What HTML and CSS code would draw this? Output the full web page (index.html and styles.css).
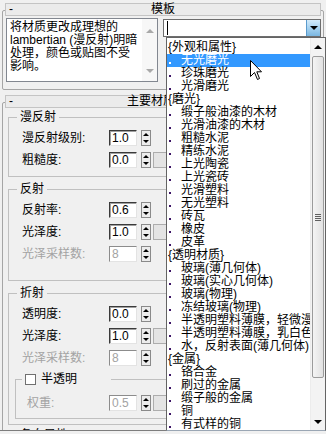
FILE: index.html
```html
<!DOCTYPE html>
<html lang="zh-CN">
<head>
    <meta charset="UTF-8">
    <title>材质模板</title>
    <link rel="stylesheet" href="styles.css">
</head>
<body>

    <div class="panel">
        <!-- Rollout: template -->
        <section class="rollout">
            <div class="rollout-head"><span class="toggle">-</span><span class="rollout-title">模板</span></div>
            <div class="template-body">
                <div class="desc">
                    <p class="desc-text">将材质更改成理想的<br>lambertian (漫反射)明暗<br>处理，颜色或贴图不受<br>影响。</p>
                    <div class="vscroll">
                        <span class="arrow up off"></span>
                        <span class="arrow down off"></span>
                    </div>
                </div>
                <div class="combo">
                    <span class="caret"></span>
                    <span class="combo-btn"><span class="arrow down"></span></span>
                </div>
            </div>
        </section>

        <!-- Rollout: main material parameters -->
        <section class="rollout">
            <div class="rollout-head"><span class="toggle">-</span><span class="rollout-title">主要材质参数</span></div>

            <div class="group group-diffuse">
                <div class="group-title">漫反射</div>
                <div class="row">
                    <span class="label">漫反射级别:</span>
                    <span class="field">1.0</span><span class="spin"></span>
                </div>
                <div class="row">
                    <span class="label">粗糙度:</span>
                    <span class="field">0.0</span><span class="spin"></span><span class="map"></span>
                </div>
            </div>

            <div class="group group-reflect">
                <div class="group-title">反射</div>
                <div class="row">
                    <span class="label">反射率:</span>
                    <span class="field">0.6</span><span class="spin"></span>
                </div>
                <div class="row">
                    <span class="label">光泽度:</span>
                    <span class="field">1.0</span><span class="spin"></span><span class="map"></span>
                </div>
                <div class="row off">
                    <span class="label">光泽采样数:</span>
                    <span class="field">8</span><span class="spin"></span>
                </div>
            </div>

            <div class="group group-refract">
                <div class="group-title">折射</div>
                <div class="row">
                    <span class="label">透明度:</span>
                    <span class="field">0.0</span><span class="spin"></span>
                </div>
                <div class="row">
                    <span class="label">光泽度:</span>
                    <span class="field">1.0</span><span class="spin"></span><span class="map"></span>
                </div>
                <div class="row off">
                    <span class="label">光泽采样数:</span>
                    <span class="field">8</span><span class="spin"></span>
                </div>

                <div class="subgroup">
                    <div class="group-title check-title"><span class="checkbox"></span>半透明</div>
                    <div class="row off">
                        <span class="label">权重:</span>
                        <span class="field">0.5</span><span class="spin"></span><span class="map"></span>
                    </div>
                </div>
            </div>

            <div class="group group-aniso">
                <div class="group-title">各向异性</div>
            </div>
        </section>
    </div>

    <!-- Open template list -->
    <div class="list">
        <div class="items">
            <div class="item cat">{外观和属性}</div>
            <div class="item sel"><i class="dot"></i>无光磨光</div>
            <div class="item"><i class="dot"></i>珍珠磨光</div>
            <div class="item"><i class="dot"></i>光滑磨光</div>
            <div class="item cat">{磨光}</div>
            <div class="item"><i class="dot"></i>缎子般油漆的木材</div>
            <div class="item"><i class="dot"></i>光滑油漆的木材</div>
            <div class="item"><i class="dot"></i>粗糙水泥</div>
            <div class="item"><i class="dot"></i>精练水泥</div>
            <div class="item"><i class="dot"></i>上光陶瓷</div>
            <div class="item"><i class="dot"></i>上光瓷砖</div>
            <div class="item"><i class="dot"></i>光滑塑料</div>
            <div class="item"><i class="dot"></i>无光塑料</div>
            <div class="item"><i class="dot"></i>砖瓦</div>
            <div class="item"><i class="dot"></i>橡皮</div>
            <div class="item"><i class="dot"></i>皮革</div>
            <div class="item cat">{透明材质}</div>
            <div class="item"><i class="dot"></i>玻璃(薄几何体)</div>
            <div class="item"><i class="dot"></i>玻璃(实心几何体)</div>
            <div class="item"><i class="dot"></i>玻璃(物理)</div>
            <div class="item"><i class="dot"></i>冻结玻璃(物理)</div>
            <div class="item"><i class="dot"></i>半透明塑料薄膜，轻微漫射</div>
            <div class="item"><i class="dot"></i>半透明塑料薄膜，乳白色</div>
            <div class="item"><i class="dot"></i>水，反射表面(薄几何体)</div>
            <div class="item cat">{金属}</div>
            <div class="item"><i class="dot"></i>铬合金</div>
            <div class="item"><i class="dot"></i>刷过的金属</div>
            <div class="item"><i class="dot"></i>缎子般的金属</div>
            <div class="item"><i class="dot"></i>铜</div>
            <div class="item"><i class="dot"></i>有式样的铜</div>
        </div>
        <div class="scrollbar">
            <span class="sb-btn"><span class="arrow up"></span></span>
            <span class="thumb"><span class="grip"></span></span>
            <span class="sb-btn sb-end"><span class="arrow down"></span></span>
        </div>
    </div>

    <!-- Mouse pointer -->
    <svg class="pointer" width="13" height="21" viewBox="0 0 13 21">
        <path d="M0.5 0.5 L0.5 16.5 L4.5 12.5 L7.5 19.5 L9.5 18.5 L6.8 11.8 L11.5 11.8 Z" fill="#fff" stroke="#000" stroke-width="1"/>
    </svg>

</body>
</html>
```

FILE: styles.css
```css
/* Basic Reset & Defaults */
* {
    margin: 0;
    padding: 0;
    box-sizing: border-box;
}

body {
    position: relative;
    width: 326px;
    height: 434px;
    overflow: hidden;
    background: #f0f0f0;
    color: #000;
    font-family: "Liberation Sans", "Noto Sans CJK SC", sans-serif;
    font-size: 12px;
    line-height: 13px;
}

.panel {
    height: 431px;
    overflow: hidden;
    border-bottom: 1px solid #7d7d7d;
}

/* Rollouts */
.rollout {
    margin: 10px 2px 0;
    border: 1px solid #a5a5a5;
    border-radius: 2px;
    padding: 0 2px 7px;
}

.rollout + .rollout {
    margin-top: 12px;
}

.rollout-head {
    display: grid;
    grid-template-columns: 14px 1fr 14px;
    height: 13px;
    margin-top: -8px;
    background: #ebebeb;
    border: 1px solid #c4c4c4;
    line-height: 11px;
}

.toggle {
    padding-left: 3px;
}

.rollout-title {
    text-align: center;
}

/* Template rollout */
.template-body {
    display: flex;
    align-items: flex-start;
    margin-top: 2px;
}

.desc {
    display: flex;
    width: 155px;
    height: 64px;
    margin-left: 1px;
    background: #fff;
    border: 1px solid #828790;
}

.desc-text {
    flex: 1;
    padding: 2px 0 0 3px;
    white-space: nowrap;
}

.vscroll {
    display: flex;
    flex-direction: column;
    justify-content: space-between;
    align-items: center;
    width: 15px;
    padding: 10px 0 8px;
    background: #f7f7f7;
}

.combo {
    display: flex;
    align-items: center;
    flex-shrink: 0;
    width: 158px;
    height: 18px;
    margin: 1px 0 0 5px;
    background: #fff;
    border: 1px solid #6e6e6e;
}

.caret {
    width: 1px;
    height: 14px;
    margin-left: 3px;
    background: #000;
}

.combo-btn {
    display: flex;
    align-items: center;
    justify-content: center;
    width: 14px;
    height: 16px;
    margin-left: auto;
    background: linear-gradient(#d4ebfa, #a6d2f0 50%, #7ab6e0);
    border-left: 1px solid #5b9bcd;
}

/* Arrows */
.arrow {
    width: 0;
    height: 0;
    border-left: 4px solid transparent;
    border-right: 4px solid transparent;
}

.arrow.up { border-bottom: 4px solid #000; }
.arrow.down { border-top: 4px solid #000; }
.arrow.up.off { border-bottom-color: #a9a9a9; }
.arrow.down.off { border-top-color: #a9a9a9; }

/* Group boxes */
.group {
    margin: 12px 0 0 3px;
    border: 1px solid #c0c0c0;
}

.group-title {
    width: max-content;
    height: 13px;
    margin: -7px 0 0 8px;
    padding: 0 3px;
    background: #f0f0f0;
}

.group-diffuse {
    margin-top: 9px;
    padding-bottom: 8px;
}

.group-diffuse .row:first-of-type { margin-top: 4px; }

.group-reflect {
    padding-bottom: 18px;
}

.group-reflect .row:first-of-type { margin-top: 0; }

.group-refract {
    padding-bottom: 5px;
}

.group-refract > .row:first-of-type { margin-top: 7px; }

.group-aniso {
    margin-top: 10px;
    height: 40px;
}

.subgroup {
    margin: 13px 0 0 6px;
    padding-bottom: 7px;
    border: 1px solid #c0c0c0;
    border-right: none;
}

.check-title {
    display: flex;
    align-items: center;
    width: 89px;
    margin-left: 6px;
}

.checkbox {
    width: 11px;
    height: 11px;
    margin-right: 5px;
    background: #fff;
    border: 1px solid #707070;
}

/* Parameter rows */
.row {
    display: flex;
    align-items: center;
    height: 16px;
    margin: 6px 0 0 13px;
}

.label {
    width: 87px;
    white-space: nowrap;
}

.subgroup .row {
    margin: 9px 0 0 11px;
}

.subgroup .label {
    width: 82px;
}

.field {
    width: 28px;
    height: 16px;
    padding-left: 2px;
    background: #fff;
    border: 1px solid;
    border-color: #3a3a3a #e3e3e3 #e3e3e3 #3a3a3a;
    box-shadow: inset 1px 1px 0 #a0a0a0;
    line-height: 14px;
}

.spin {
    display: flex;
    flex-direction: column;
    justify-content: space-around;
    align-items: center;
    width: 10px;
    height: 16px;
    margin-left: 4px;
    background: #ececec;
    border: 1px solid #8a8a8a;
}

.spin::before,
.spin::after {
    content: '';
    border-left: 3px solid transparent;
    border-right: 3px solid transparent;
}

.spin::before { border-bottom: 3px solid #000; }
.spin::after { border-top: 3px solid #000; }

.map {
    width: 14px;
    height: 16px;
    margin-left: 2px;
    background: #e4e4e4;
    border: 1px solid #adadad;
}

.row.off .label,
.row.off .field {
    color: #a3a3a3;
}

.row.off .field {
    border-color: #8c8c8c #e3e3e3 #e3e3e3 #8c8c8c;
    box-shadow: none;
}

/* Dropdown list */
.list {
    position: absolute;
    left: 166px;
    top: 37px;
    display: flex;
    width: 160px;
    height: 394px;
    background: #fff;
    border: 1px solid #646464;
    border-bottom-color: #9aa6b4;
}

.items {
    flex: 1;
    overflow: hidden;
    padding-top: 3px;
    font-family: "Liberation Sans", "Noto Sans CJK SC", sans-serif;
}

.item {
    display: flex;
    align-items: center;
    height: 13px;
    white-space: nowrap;
}

.item.cat {
    padding-left: 1px;
}

.item.sel {
    background: #3399ff;
    color: #fff;
}

.dot {
    flex-shrink: 0;
    width: 2px;
    height: 2px;
    margin: 5px 10px 0 2px;
    background: #3c1466;
}

.item.sel .dot {
    background: #fff;
}

.scrollbar {
    display: flex;
    flex-direction: column;
    width: 15px;
    background: #f3f3f3;
    border-left: 1px solid #ececec;
}

.sb-btn {
    display: flex;
    align-items: center;
    justify-content: center;
    height: 17px;
}

.sb-end {
    margin-top: auto;
}

.thumb {
    display: flex;
    align-items: center;
    justify-content: center;
    height: 322px;
    margin: 1px 1px 0;
    background: linear-gradient(to right, #f4f4f4, #e1e1e1);
    border: 1px solid #9b9b9b;
    border-radius: 2px;
}

.grip {
    width: 6px;
    height: 7px;
    background: repeating-linear-gradient(#5f5f5f 0 1px, transparent 1px 2px);
}

/* Pointer over the list */
.pointer {
    position: absolute;
    left: 250px;
    top: 60px;
}
```
